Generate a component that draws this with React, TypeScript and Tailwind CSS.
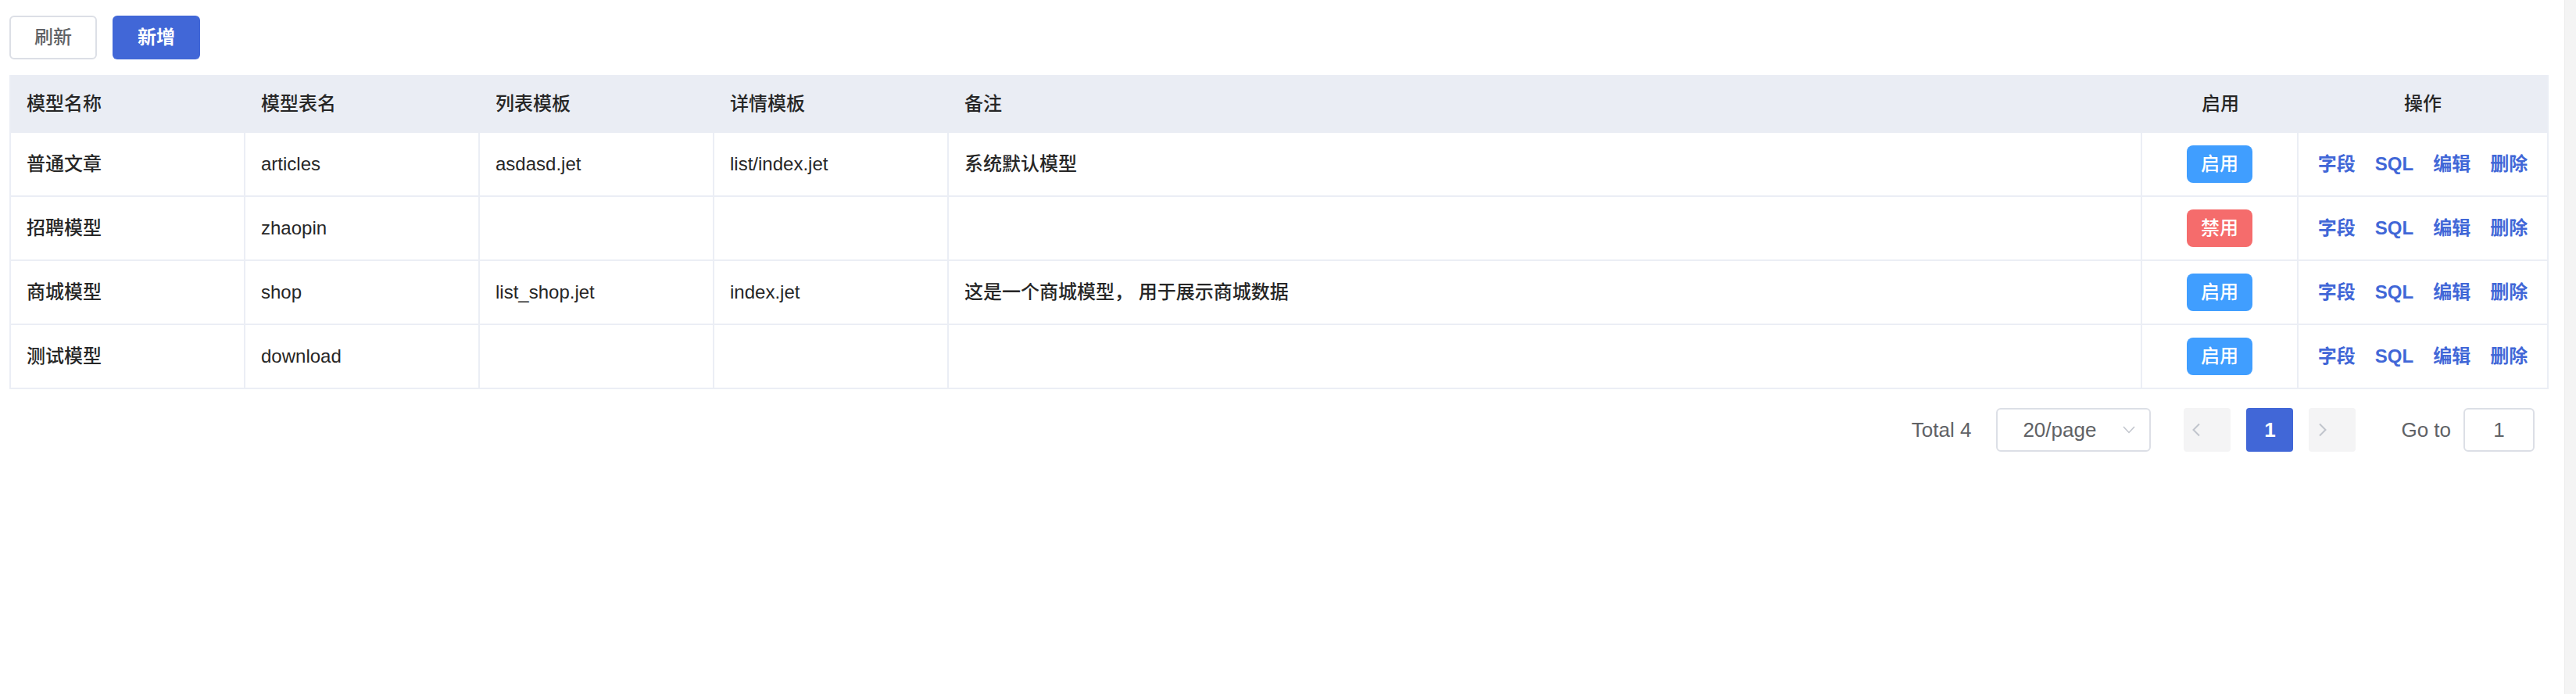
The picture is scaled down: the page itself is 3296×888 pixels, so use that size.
import React from 'react';

type Row = {
  name: string;
  table: string;
  list: string;
  detail: string;
  remark: string;
  enabled: boolean;
};

const rows: Row[] = [
  {name: '普通文章', table: 'articles', list: 'asdasd.jet', detail: 'list/index.jet', remark: '系统默认模型', enabled: true},
  {name: '招聘模型', table: 'zhaopin', list: '', detail: '', remark: '', enabled: false},
  {name: '商城模型', table: 'shop', list: 'list_shop.jet', detail: 'index.jet', remark: '这是一个商城模型， 用于展示商城数据', enabled: true},
  {name: '测试模型', table: 'download', list: '', detail: '', remark: '', enabled: true},
];

const cols = 'grid grid-cols-[300px_300px_300px_300px_1fr_200px_318px]';
const font = { fontFamily: '"Liberation Sans", "Noto Sans CJK SC", sans-serif' };

const ChevronLeft = () => (
  <svg width="12" height="18" viewBox="0 0 12 18" fill="none">
    <path d="M10 1.5 L2.5 9 L10 16.5" stroke="#c0c4cc" strokeWidth="2" />
  </svg>
);

const ChevronRight = () => (
  <svg width="12" height="18" viewBox="0 0 12 18" fill="none">
    <path d="M2 1.5 L9.5 9 L2 16.5" stroke="#c0c4cc" strokeWidth="2" />
  </svg>
);

const ChevronDown = () => (
  <svg width="16" height="10" viewBox="0 0 16 10" fill="none">
    <path d="M1 1 L8 8.5 L15 1" stroke="#c0c4cc" strokeWidth="1.5" />
  </svg>
);

export default function App() {
  return (
    <div className="flex w-full h-[888px] bg-white text-[#262626]" style={font}>
      <div className="flex-1 pl-[12px] pr-[20px] pt-[20px]">
        {/* toolbar */}
        <div className="flex gap-[20px]">
          <button className="w-[112px] h-[56px] rounded-[6px] border-2 border-[#dcdfe6] bg-white text-[24px] font-medium text-[#606266]">
            刷新
          </button>
          <button className="w-[112px] h-[56px] rounded-[6px] bg-[#4167d7] text-[24px] font-semibold text-white">
            新增
          </button>
        </div>

        {/* table */}
        <div className="mt-[20px] border-x-2 border-[#ebeef5]">
          <div className={`${cols} h-[74px] bg-[#eaedf4] text-[24px] font-medium`}>
            <div className="flex items-center pl-[20px]">模型名称</div>
            <div className="flex items-center pl-[20px]">模型表名</div>
            <div className="flex items-center pl-[20px]">列表模板</div>
            <div className="flex items-center pl-[20px]">详情模板</div>
            <div className="flex items-center pl-[20px]">备注</div>
            <div className="flex items-center justify-center">启用</div>
            <div className="flex items-center justify-center">操作</div>
          </div>
          {rows.map((r) => (
            <div key={r.table} className={`${cols} h-[82px] border-b-2 border-[#ebeef5] text-[24px] font-medium`}>
              <div className="flex items-center pl-[20px] border-r-2 border-[#ebeef5]">{r.name}</div>
              <div className="flex items-center pl-[20px] border-r-2 border-[#ebeef5]">{r.table}</div>
              <div className="flex items-center pl-[20px] border-r-2 border-[#ebeef5]">{r.list}</div>
              <div className="flex items-center pl-[20px] border-r-2 border-[#ebeef5]">{r.detail}</div>
              <div className="flex items-center pl-[20px] border-r-2 border-[#ebeef5]">{r.remark}</div>
              <div className="flex items-center justify-center border-r-2 border-[#ebeef5]">
                <span
                  className={`flex items-center justify-center w-[84px] h-[48px] rounded-[8px] text-white text-[24px] ${
                    r.enabled ? 'bg-[#409eff]' : 'bg-[#f56c6c]'
                  }`}
                >
                  {r.enabled ? '启用' : '禁用'}
                </span>
              </div>
              <div className="flex items-center justify-center gap-[25px] text-[#4167d7] font-semibold">
                <span>字段</span>
                <span>SQL</span>
                <span>编辑</span>
                <span>删除</span>
              </div>
            </div>
          ))}
        </div>

        {/* pagination */}
        <div className="flex items-center justify-end mt-[24px] pr-[18px] text-[26px] text-[#606266]">
          <span>Total 4</span>
          <div className="ml-[32px] flex items-center justify-between w-[198px] h-[56px] pl-[32px] pr-[18px] rounded-[6px] border-2 border-[#dcdfe6]">
            <span>20/page</span>
            <ChevronDown />
          </div>
          <div className="ml-[42px] flex items-center pl-[10px] w-[60px] h-[56px] rounded-[4px] bg-[#f4f4f5]">
            <ChevronLeft />
          </div>
          <div className="ml-[20px] flex items-center justify-center w-[60px] h-[56px] rounded-[4px] bg-[#4167d7] text-white font-bold">
            1
          </div>
          <div className="ml-[20px] flex items-center pl-[12px] w-[60px] h-[56px] rounded-[4px] bg-[#f4f4f5]">
            <ChevronRight />
          </div>
          <span className="ml-[58px]">Go to</span>
          <div className="ml-[16px] flex items-center justify-center w-[91px] h-[56px] rounded-[6px] border-2 border-[#dcdfe6]">
            1
          </div>
        </div>
      </div>
      <div className="w-[15px] bg-[#f4f4f4] border-l border-[#ececec]" />
    </div>
  );
}
